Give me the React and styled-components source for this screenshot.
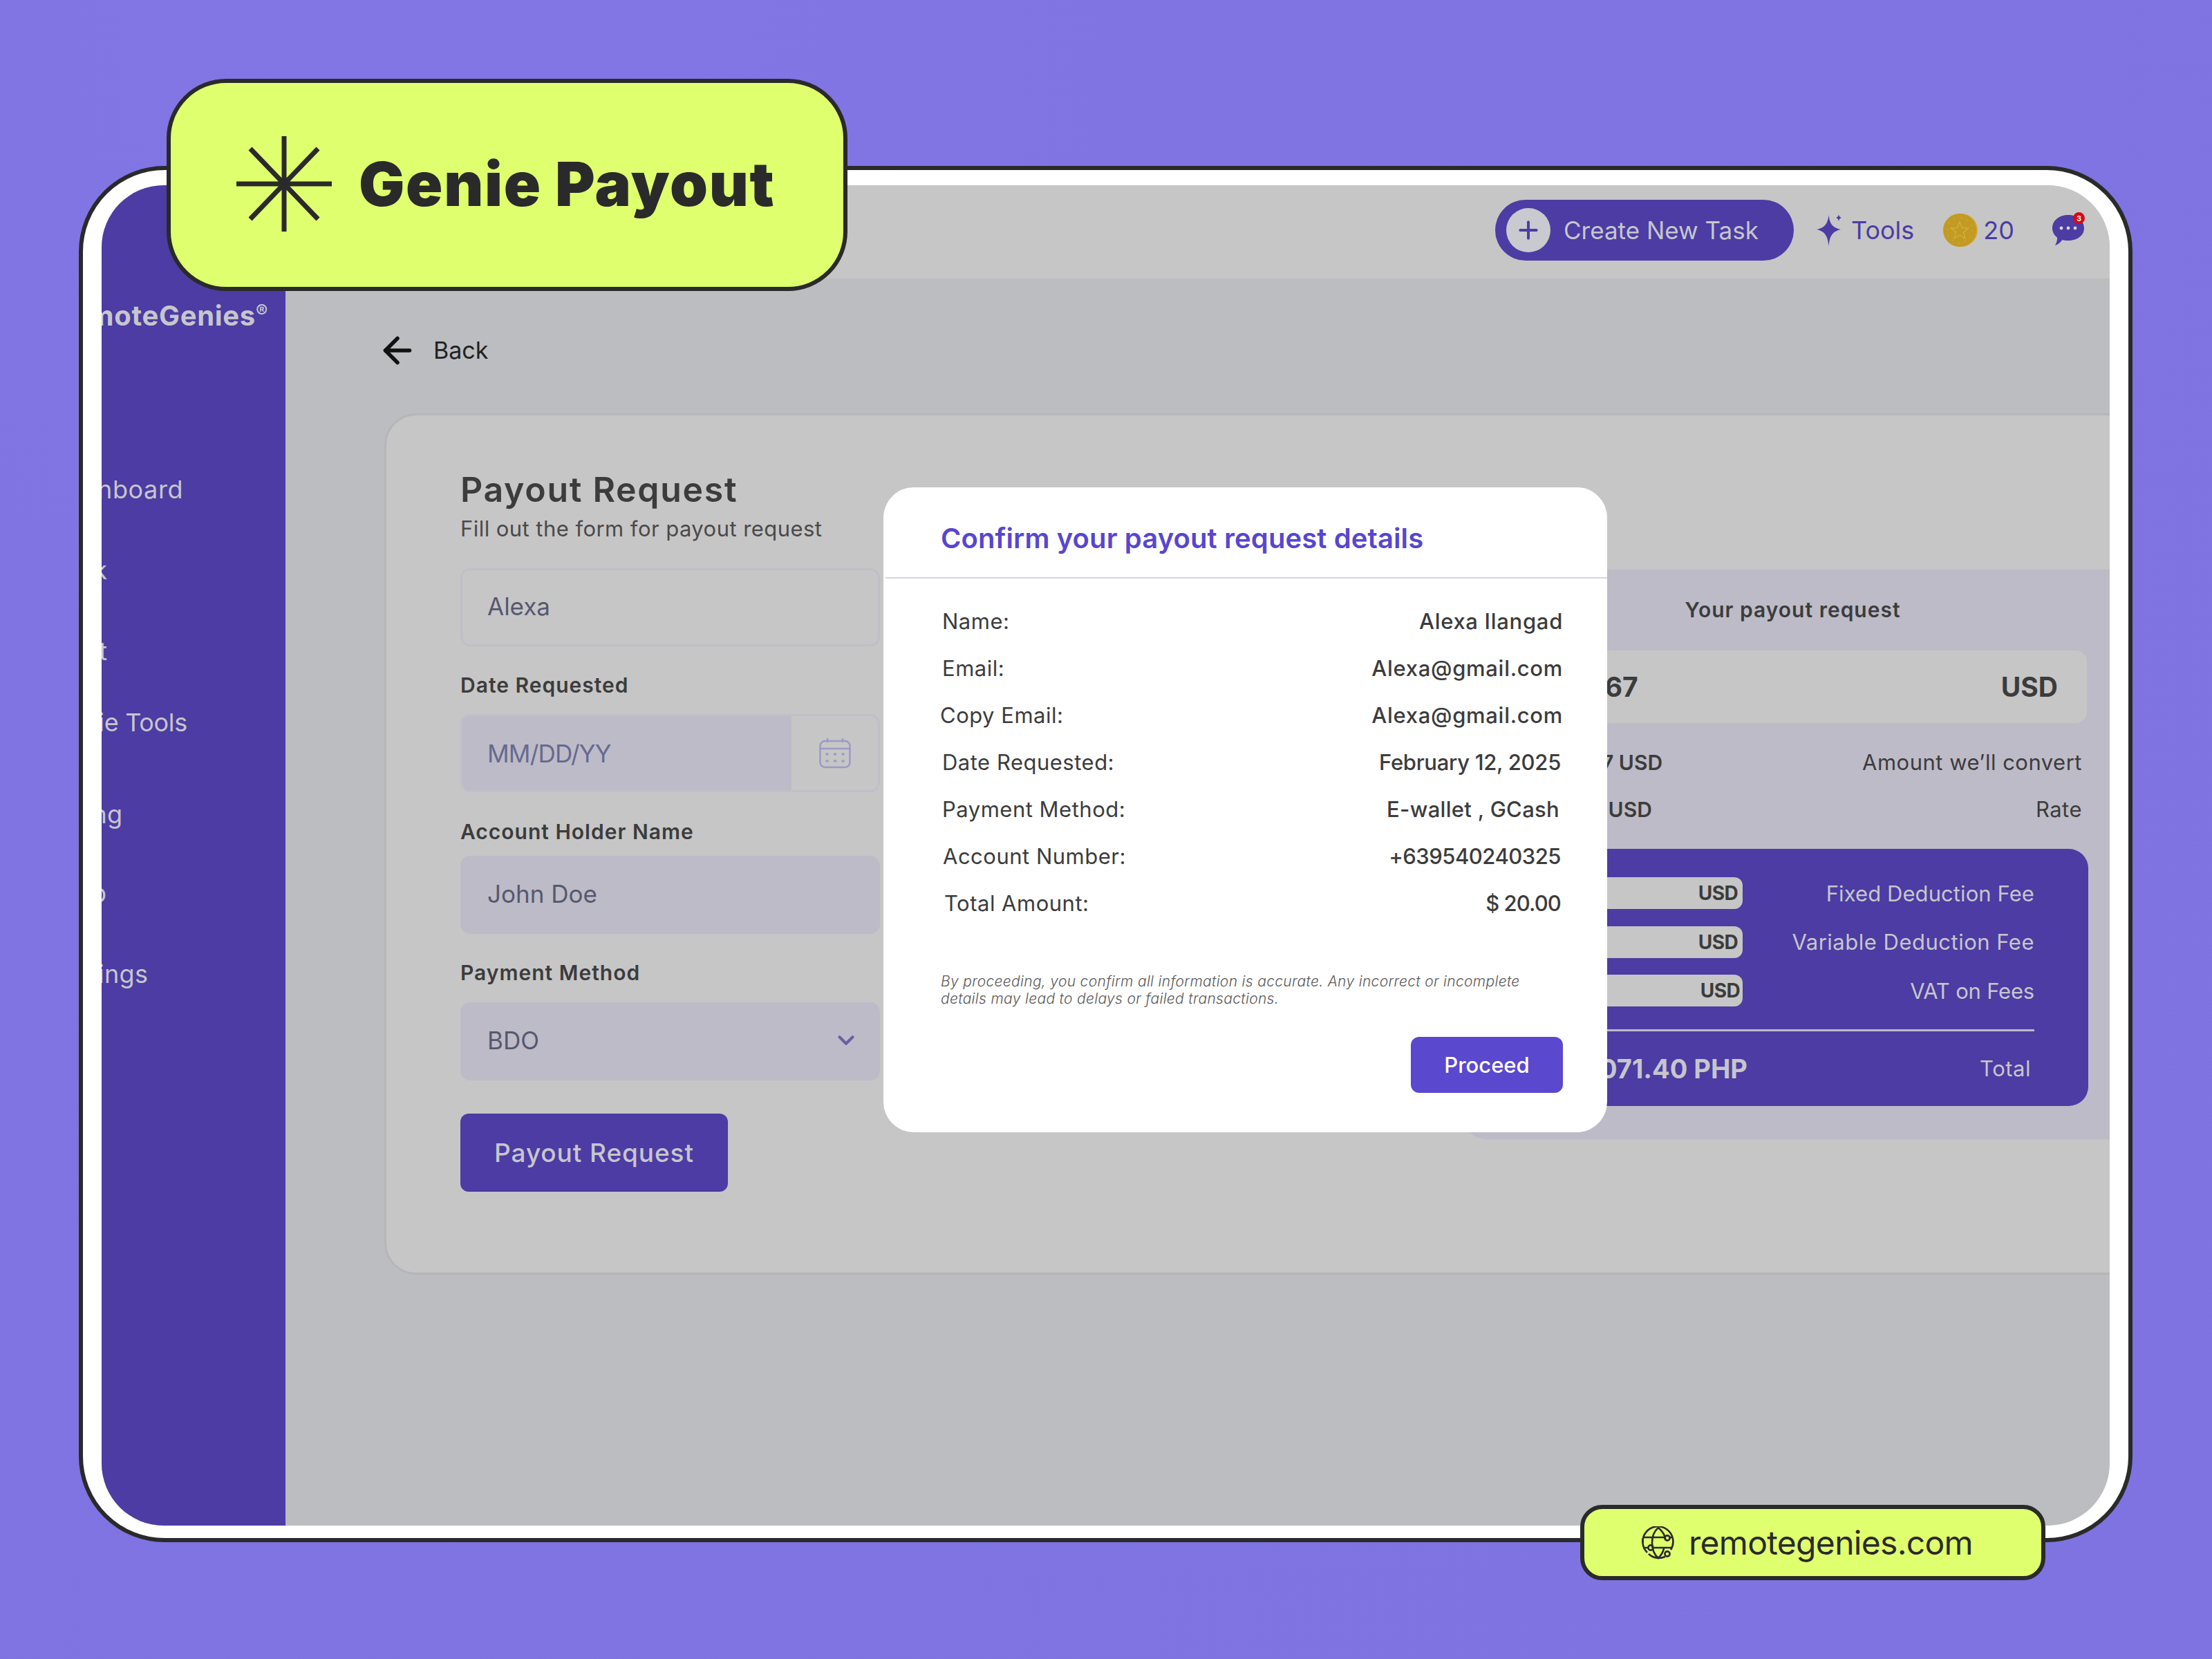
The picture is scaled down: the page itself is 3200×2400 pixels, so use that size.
import React from "react"
import styled, { createGlobalStyle } from "styled-components"
import { ArrowLeft, ChevronDown, Plus } from "lucide-react"

const PURPLE = "#4c3ca3"
const LIME = "#e0ff6e"
const INK = "#2a2a2a"
const TEXT = "#3c3c3c"
const MUTED = "#c6c6cc"

const GlobalStyle = createGlobalStyle`
  html, body { margin: 0; padding: 0; }
  body { font-family: Inter, "Noto Sans", sans-serif; }
  * { box-sizing: border-box; }
`

const Stage = styled.div`
  position: relative;
  width: 3200px;
  height: 2400px;
  padding: 240px 0 0 114px;
  overflow: hidden;
  background: radial-gradient(circle at 20% 0, #8276e4 0, #7f74e2 40%, #7e73e1 100%);
`
const Frame = styled.div`
  width: 2971px;
  height: 1991px;
  padding: 22px 27px 18px 27px;
  background: #fff;
  border: 6px solid ${INK};
  border-radius: 124px;
`
const Screen = styled.div`
  display: flex;
  width: 100%;
  height: 100%;
  overflow: hidden;
  border-radius: 90px;
  background: #bcbdc0;
`
const Sidebar = styled.aside`
  flex: 0 0 266px;
  padding-top: 432px;
  overflow: hidden;
  background: ${PURPLE};
  color: ${MUTED};
`
const Logo = styled.div`
  margin: -267px 0 0 -70px;
  height: 48px;
  font-size: 40px;
  line-height: 48px;
  font-weight: 700;
  letter-spacing: 0.7px;
  white-space: nowrap;
  sup { font-size: 26px; font-weight: 600; vertical-align: 12px; line-height: 0; }
`
const NavList = styled.nav`
  display: flex;
  flex-direction: column;
  margin: 203px 0 0 -73px;
`
const NavItem = styled.div`
  height: 48px;
  margin-top: ${p => p.$top}px;
  font-size: 36px;
  line-height: 48px;
  letter-spacing: ${p => p.$spacing}px;
  white-space: nowrap;
`
const Main = styled.main`
  flex: 1;
  min-width: 0;
  display: flex;
  flex-direction: column;
`
const TopBar = styled.header`
  flex: 0 0 135px;
  display: flex;
  align-items: center;
  padding: 0 37px 5px 0;
  justify-content: flex-end;
  background: #c6c6c6;
`
const CreateButton = styled.div`
  display: flex;
  align-items: center;
  width: 432px;
  height: 88px;
  margin-right: 33px;
  padding-left: 16px;
  border-radius: 44px;
  background: ${PURPLE};
  color: ${MUTED};
  font-size: 35px;
`
const PlusCircle = styled.span`
  display: flex;
  align-items: center;
  justify-content: center;
  width: 64px;
  height: 64px;
  margin-right: 19px;
  border-radius: 50%;
  background: #c9c9d0;
  color: ${PURPLE};
`
const TopLink = styled.div`
  display: flex;
  align-items: center;
  color: ${PURPLE};
  font-size: 36px;
  gap: ${p => p.$gap}px;
  margin-right: ${p => p.$after}px;
`
const BackRow = styled.div`
  display: flex;
  align-items: center;
  height: 195px;
  padding: 12px 0 0 132px;
  color: #222;
  font-size: 34px;
  gap: 22px;
  svg { color: #111; }
`
const Card = styled.section`
  display: flex;
  width: 2560px;
  height: 1246px;
  margin-left: 143px;
  padding: 77px 0 0 107px;
  background: #c6c6c6;
  border: 3px solid #b6b6b9;
  border-radius: 46px;
`
const FormColumn = styled.div`
  flex: 0 0 607px;
  display: flex;
  flex-direction: column;
`
const Title = styled.h1`
  margin: 0;
  height: 60px;
  color: ${TEXT};
  font-size: 50px;
  line-height: 60px;
  font-weight: 600;
  letter-spacing: 1.7px;
`
const Subtitle = styled.p`
  margin: 7px 0 0;
  height: 40px;
  color: #4a4a4a;
  font-size: 31px;
  line-height: 40px;
  letter-spacing: 0.45px;
  white-space: nowrap;
`
const Label = styled.label`
  margin-top: ${p => p.$top}px;
  height: 40px;
  color: ${TEXT};
  font-size: 30px;
  line-height: 40px;
  font-weight: 600;
  letter-spacing: 1px;
`
const Input = styled.div`
  display: flex;
  align-items: center;
  justify-content: space-between;
  height: 113px;
  margin-top: ${p => p.$top}px;
  padding: 0 ${p => (p.$filled ? 30 : 36)}px 3px ${p => (p.$filled ? 39 : 36)}px;
  border-radius: 14px;
  border: ${p => (p.$filled ? "none" : "3px solid #bfbfc9")};
  background: ${p => (p.$filled ? "#bdbbc7" : "transparent")};
  color: #565870;
  font-size: 35px;
  svg { color: #6a5fa6; }
`
const DateInput = styled.div`
  display: flex;
  height: 113px;
  margin-top: 22px;
  border-radius: 14px;
  border: 3px solid #bfbfc9;
  overflow: hidden;
`
const DateText = styled.div`
  flex: 1;
  display: flex;
  align-items: center;
  padding-left: 36px;
  background: #bdbbc7;
  color: #666a90;
  font-size: 35px;
  letter-spacing: -0.8px;
`
const DateIcon = styled.div`
  flex: 0 0 125px;
  display: flex;
  align-items: center;
  justify-content: center;
  color: #9c9ac4;
`
const SubmitButton = styled.div`
  display: flex;
  align-items: center;
  justify-content: center;
  width: 387px;
  height: 113px;
  margin-top: 48px;
  border-radius: 12px;
  background: ${PURPLE};
  color: ${MUTED};
  font-size: 37px;
  font-weight: 500;
  letter-spacing: 0.9px;
`
const SummaryPanel = styled.aside`
  flex: 0 0 960px;
  align-self: flex-start;
  height: 824px;
  margin: 146px 0 0 847px;
  padding: 38px 0 0 46px;
  border-radius: 28px;
  background: #bdbbc7;
`
const SummaryInner = styled.div`
  display: flex;
  flex-direction: column;
  width: 855px;
`
const SummaryTitle = styled.div`
  height: 40px;
  text-align: center;
  color: ${TEXT};
  font-size: 30px;
  line-height: 40px;
  font-weight: 600;
  letter-spacing: 1px;
`
const AmountField = styled.div`
  display: flex;
  align-items: center;
  justify-content: space-between;
  width: 853px;
  height: 105px;
  margin-top: 39px;
  padding: 0 42px 0 68px;
  border-radius: 16px;
  background: #c6c6c6;
  color: ${TEXT};
  font-size: 39px;
  font-weight: 700;
`
const InfoRow = styled.div`
  display: flex;
  justify-content: space-between;
  height: 40px;
  margin-top: ${p => p.$top}px;
  padding: 0 9px 0 92px;
  color: ${TEXT};
  font-size: 31px;
  line-height: 40px;
  letter-spacing: 0.5px;
  b { font-weight: 600; font-size: 30px; letter-spacing: 0; }
`
const FeeBox = styled.div`
  display: flex;
  flex-direction: column;
  height: 372px;
  margin-top: 37px;
  padding: 41px 78px 0 46px;
  border-radius: 28px;
  background: ${PURPLE};
  color: ${MUTED};
`
const FeeRow = styled.div`
  display: flex;
  align-items: center;
  justify-content: space-between;
  height: 46px;
  margin-bottom: 24.5px;
  font-size: 31px;
`
const FeePill = styled.span`
  display: flex;
  align-items: center;
  justify-content: flex-end;
  width: 309px;
  height: 46px;
  padding-right: ${p => p.$pad}px;
  border-radius: 12px;
  background: #c6c6c6;
  color: ${TEXT};
  font-size: 28px;
  font-weight: 700;
  letter-spacing: -0.6px;
`
const FeeName = styled.span`
  letter-spacing: ${p => p.$spacing}px;
`
const FeeRule = styled.div`
  height: 3px;
  margin-top: 8px;
  background: #bdbbc7;
`
const FeeTotal = styled.div`
  display: flex;
  align-items: center;
  justify-content: space-between;
  height: 50px;
  margin-top: 29px;
  padding: 0 5px 0 74px;
  font-size: 31px;
  letter-spacing: 0.5px;
  b { font-size: 38px; font-weight: 700; letter-spacing: 0; }
`
const Modal = styled.div`
  position: absolute;
  left: 1278px;
  top: 705px;
  width: 1047px;
  height: 933px;
  display: flex;
  flex-direction: column;
  border-radius: 44px;
  background: #fff;
`
const ModalHeader = styled.h2`
  height: 132px;
  margin: 0 0 0 3px;
  padding: 49px 0 0 80px;
  border-bottom: 2px solid #d6d6e0;
  color: #5746cf;
  font-size: 40px;
  line-height: 50px;
  font-weight: 600;
  letter-spacing: 0.1px;
`
const DetailList = styled.dl`
  margin: 27px 0 0;
  padding: 0 64px 0 85px;
`
const DetailRow = styled.div`
  display: flex;
  align-items: center;
  justify-content: space-between;
  height: 68px;
  font-size: 31px;
  color: ${TEXT};
  margin-left: ${p => p.$left}px;
  margin-right: ${p => p.$right}px;
`
const DetailKey = styled.dt`
  margin: 0;
  letter-spacing: 0.5px;
`
const DetailValue = styled.dd`
  margin: 0;
  font-weight: 500;
  letter-spacing: ${p => p.$spacing}px;
`
const Disclaimer = styled.p`
  width: 860px;
  margin: 68px 0 0 83px;
  color: #5a5a5a;
  font-size: 21px;
  line-height: 24.5px;
  font-style: italic;
  font-weight: 300;
  letter-spacing: 0.32px;
`
const ProceedButton = styled.div`
  display: flex;
  align-items: center;
  justify-content: center;
  align-self: flex-end;
  width: 220px;
  height: 81px;
  margin: 43px 64px 0 0;
  border-radius: 12px;
  background: #5a48cf;
  color: #fff;
  font-size: 31px;
  font-weight: 500;
`
const TitleBadge = styled.div`
  position: absolute;
  left: 241px;
  top: 114px;
  width: 985px;
  height: 307px;
  display: flex;
  align-items: center;
  padding: 0 0 4px 95px;
  gap: 39px;
  border: 6px solid ${INK};
  border-radius: 86px;
  background: ${LIME};
  color: ${INK};
  font-size: 88px;
  font-weight: 900;
  letter-spacing: 1.7px;
`
const SiteBadge = styled.div`
  position: absolute;
  left: 2286px;
  top: 2177px;
  width: 673px;
  height: 109px;
  display: flex;
  align-items: center;
  padding-left: 83px;
  gap: 20px;
  border: 6px solid ${INK};
  border-radius: 32px;
  background: ${LIME};
  color: ${INK};
  font-size: 48px;
  line-height: 50px;
  letter-spacing: -0.7px;
`
const ChatWrap = styled.span`
  position: relative;
  display: flex;
  width: 46px;
  height: 46px;
`
const ChatBadge = styled.span`
  position: absolute;
  top: -3px;
  right: -1px;
  display: flex;
  align-items: center;
  justify-content: center;
  width: 17px;
  height: 17px;
  border-radius: 50%;
  background: #d40a14;
  color: #eee;
  font-size: 11px;
  font-weight: 700;
`

const StarBurst = () => (
  <svg width="138" height="138" viewBox="0 0 138 138" fill="none" stroke={INK} strokeWidth="7">
    <path d="M69 0V138M0 69H138M20 18L118 120M118 18L20 120" />
  </svg>
)
const Sparkle = () => (
  <svg width="37" height="46" viewBox="0 0 37 46" fill={PURPLE}>
    <path d="M17.500 1C19 13 22 19 35 22C22 25 19 32 17.500 46C16 32 13 25 0 22C13 19 16 13 17.500 1Z" />
    <path d="M32 0C32.500 3 33.500 4 36 5C33.500 6 32.500 7 32 10C31.500 7 30.500 6 28 5C30.500 4 31.500 3 32 0Z" />
  </svg>
)
const Coin = () => (
  <svg width="50" height="50" viewBox="0 0 50 50">
    <circle cx="26" cy="25" r="24" fill="#d3ab33" />
    <circle cx="24" cy="25" r="24" fill="#c39a22" />
    <circle cx="24" cy="25" r="18" fill="none" stroke="#d4b03e" strokeWidth="1.5" strokeDasharray="1.5 8" />
    <path d="M24 13L27.500 21.500L36.500 22L29.500 28L32 37L24 32L16 37L18.500 28L11.500 22L20.500 21.500Z" fill="none" stroke="#d4b03e" strokeWidth="1.4" />
  </svg>
)
const ChatIcon = () => (
  <ChatWrap>
    <svg width="46" height="46" viewBox="0 0 46 46">
      <path d="M23 1C35.500 1 46 8.500 46 20C46 31.500 35 38 23 38C20 38 17 37.600 14.500 37C12 40.500 8 44 4 45C6 41.500 7.400 37.600 7 33.500C2.600 30 0 25.500 0 20C0 8.500 10.500 1 23 1Z" fill={PURPLE} />
      <circle cx="13" cy="20" r="2.400" fill="#d5d5de" />
      <circle cx="23" cy="20" r="2.400" fill="#d5d5de" />
      <circle cx="33" cy="20" r="2.400" fill="#d5d5de" />
    </svg>
    <ChatBadge>3</ChatBadge>
  </ChatWrap>
)
const CalendarIcon = () => (
  <svg width="46" height="44" viewBox="0 0 46 44" fill="none" stroke="currentColor" strokeWidth="2.5" strokeLinecap="round">
    <rect x="1.500" y="4" width="43" height="38" rx="7" />
    <path d="M1.500 15H44.500M12 1V5M34 1V5" />
    <path d="M11 23H12M22.500 23H23.500M34 23H35M11 33H12M22.500 33H23.500M34 33H35" strokeWidth="3.500" />
  </svg>
)
const GlobeIcon = () => (
  <svg width="48" height="48" viewBox="0 0 48 48" fill="none" stroke={INK} strokeWidth="2.600">
    <path d="M42 34A22 22 0 1 0 8 38" />
    <path d="M10 40A22 22 0 0 0 34 44" />
    <path d="M24 2C12 12 12 36 24 46C28 42 31 38 32 32M24 2C30 7 34 14 34.500 20" />
    <path d="M3 16H33M41 16H45M2 31H9M18 31H44M1.500 24V18" />
    <circle cx="37" cy="17" r="3.600" />
    <circle cx="13" cy="31" r="3.600" />
    <circle cx="37" cy="40" r="3.600" />
  </svg>
)

const NAV = [
  ["Dashboard", 0, 0.6],
  ["Task", 69, 0.5],
  ["Chat", 69, 0.5],
  ["Genie Tools", 55, -0.3],
  ["Billing", 85, 0.2],
  ["Help", 66, 0.5],
  ["Settings", 69, 0.3],
]
const DETAILS = [
  ["Name:", "Alexa Ilangad", 0, 0, 0.7],
  ["Email:", "Alexa@gmail.com", 0, 0, 0.7],
  ["Copy Email:", "Alexa@gmail.com", -3, 0, 0.7],
  ["Date Requested:", "February 12, 2025", 0, 3, -0.3],
  ["Payment Method:", "E-wallet , GCash", 0, 5, 0.3],
  ["Account Number:", "+639540240325", 1, 3, -0.5],
  ["Total Amount:", "$ 20.00", 3, 3, -0.9],
]
const FEES = [
  ["Fixed Deduction Fee", 7, 0.08],
  ["Variable Deduction Fee", 7, 0.5],
  ["VAT on Fees", 4, -0.2],
]

export default function App() {
  return (
    <Stage>
      <GlobalStyle />
      <Frame>
        <Screen>
          <Sidebar>
            <Logo>RemoteGenies<sup>®</sup></Logo>
            <NavList>
              {NAV.map(([name, top, spacing]) => <NavItem key={name} $top={top} $spacing={spacing}>{name}</NavItem>)}
            </NavList>
          </Sidebar>
          <Main>
            <TopBar>
              <CreateButton>
                <PlusCircle><Plus size={40} strokeWidth={2.4} /></PlusCircle>
                Create New Task
              </CreateButton>
              <TopLink $gap={13} $after={42}><Sparkle />Tools</TopLink>
              <TopLink $gap={8} $after={55}><Coin />20</TopLink>
              <ChatIcon />
            </TopBar>
            <BackRow>
              <ArrowLeft size={60} strokeWidth={2.2} />
              Back
            </BackRow>
            <Card>
              <FormColumn>
                <Title>Payout Request</Title>
                <Subtitle>Fill out the form for payout request</Subtitle>
                <Input $top={37}>Alexa</Input>
                <Label $top={36}>Date Requested</Label>
                <DateInput>
                  <DateText>MM/DD/YY</DateText>
                  <DateIcon><CalendarIcon /></DateIcon>
                </DateInput>
                <Label $top={37}>Account Holder Name</Label>
                <Input $top={15} $filled>John Doe</Input>
                <Label $top={36}>Payment Method</Label>
                <Input $top={23} $filled>BDO<ChevronDown size={38} strokeWidth={2.6} /></Input>
                <SubmitButton>Payout Request</SubmitButton>
              </FormColumn>
              <SummaryPanel>
                <SummaryInner>
                  <SummaryTitle>Your payout request</SummaryTitle>
                  <AmountField><span>$ 19.67</span><span>USD</span></AmountField>
                  <InfoRow $top={37}><b>19.67 USD</b><span>Amount we’ll convert</span></InfoRow>
                  <InfoRow $top={28}><b>1.00 USD</b><span>Rate</span></InfoRow>
                  <FeeBox>
                    {FEES.map(([name, pad, spacing]) => (
                      <FeeRow key={name}>
                        <FeePill $pad={pad}>USD</FeePill>
                        <FeeName $spacing={spacing}>{name}</FeeName>
                      </FeeRow>
                    ))}
                    <FeeRule />
                    <FeeTotal><b>1,071.40 PHP</b><span>Total</span></FeeTotal>
                  </FeeBox>
                </SummaryInner>
              </SummaryPanel>
            </Card>
          </Main>
        </Screen>
      </Frame>
      <Modal>
        <ModalHeader>Confirm your payout request details</ModalHeader>
        <DetailList>
          {DETAILS.map(([key, value, left, right, spacing]) => (
            <DetailRow key={key} $left={left} $right={right}>
              <DetailKey>{key}</DetailKey>
              <DetailValue $spacing={spacing}>{value}</DetailValue>
            </DetailRow>
          ))}
        </DetailList>
        <Disclaimer>By proceeding, you confirm all information is accurate. Any incorrect or incomplete details may lead to delays or failed transactions.</Disclaimer>
        <ProceedButton>Proceed</ProceedButton>
      </Modal>
      <TitleBadge><StarBurst />Genie Payout</TitleBadge>
      <SiteBadge><GlobeIcon />remotegenies.com</SiteBadge>
    </Stage>
  )
}
